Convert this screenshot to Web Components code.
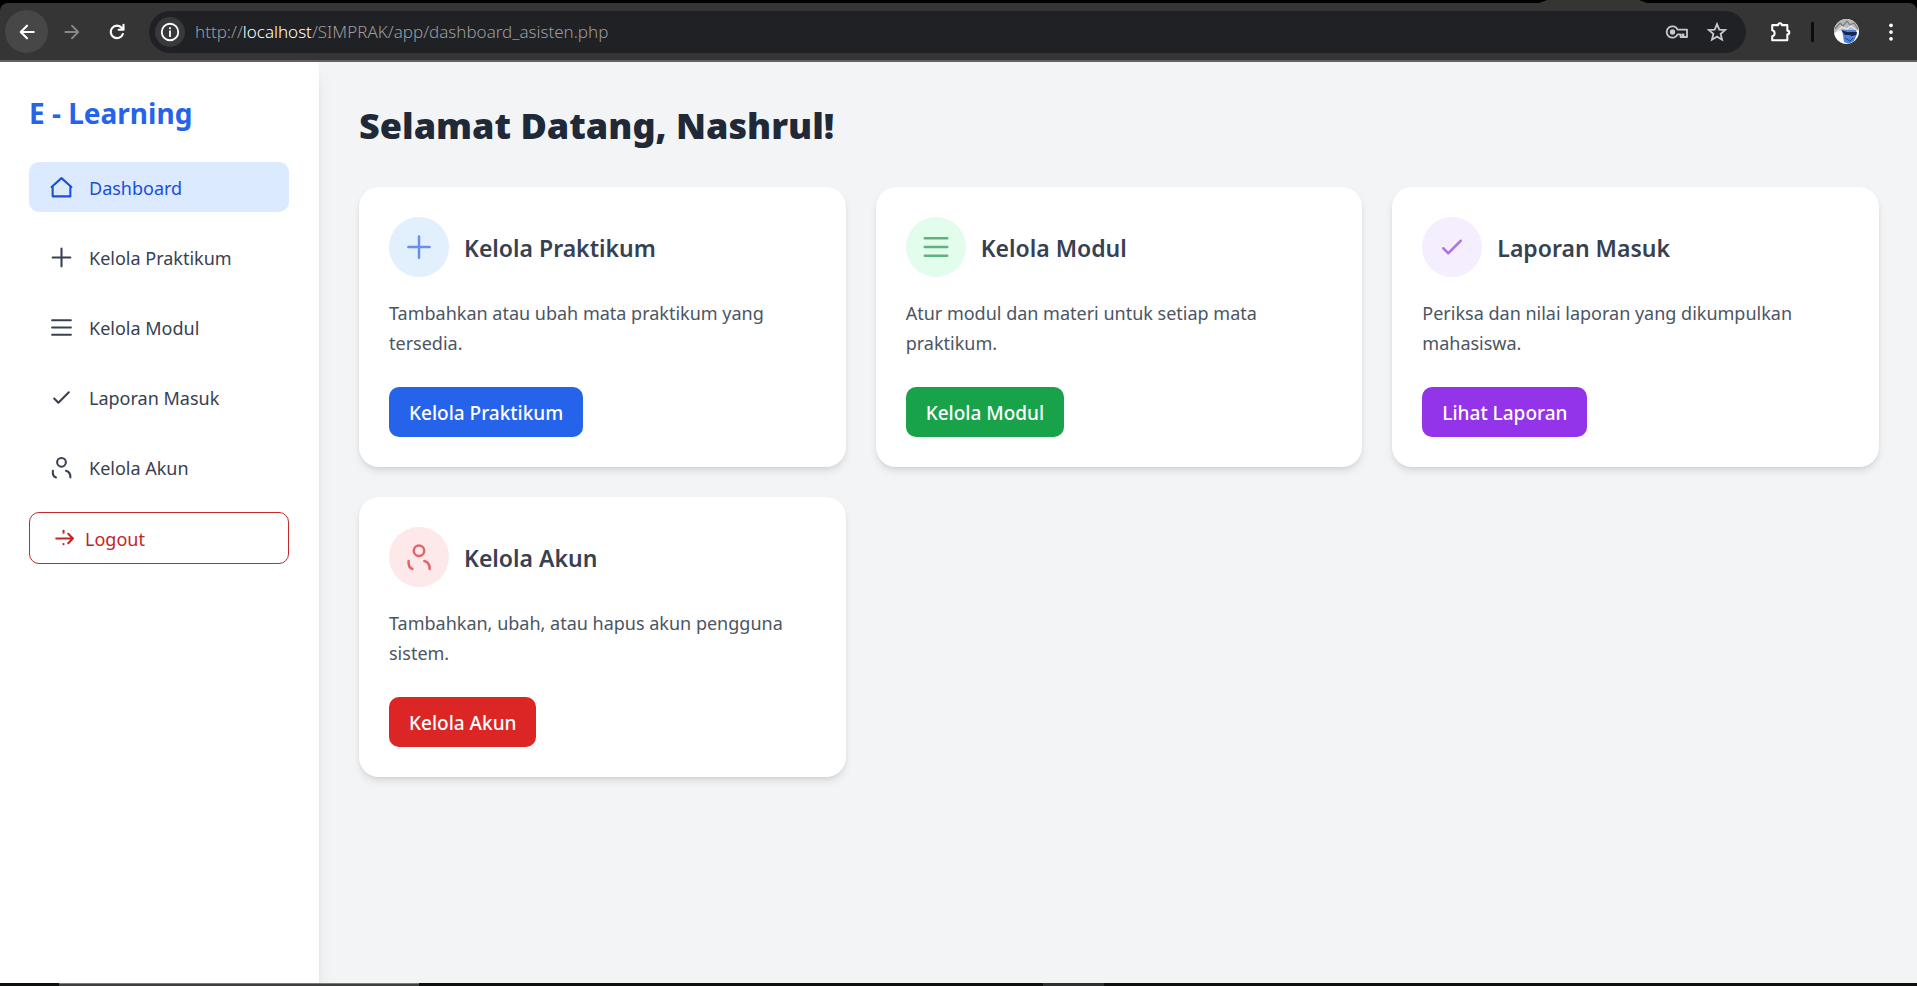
<!DOCTYPE html>
<html lang="id">
<head>
<meta charset="utf-8">
<meta name="viewport" content="width=device-width, initial-scale=1">
<title>E - Learning</title>
<style>
  body { margin: 0; font-family: "Noto Sans", "Open Sans", sans-serif; background: #f3f4f6; }
</style>
</head>
<body>
<app-shell>
  <browser-bar slot="top" scheme="http://" host="localhost" path="/SIMPRAK/app/dashboard_asisten.php"></browser-bar>
  <side-bar slot="side" heading="E - Learning">
    <nav-item icon="home" active>Dashboard</nav-item>
    <nav-item icon="plus">Kelola Praktikum</nav-item>
    <nav-item icon="menu">Kelola Modul</nav-item>
    <nav-item icon="check">Laporan Masuk</nav-item>
    <nav-item icon="user">Kelola Akun</nav-item>
    <nav-item icon="logout" outlined>Logout</nav-item>
  </side-bar>
  <dash-board heading="Selamat Datang, Nashrul!">
    <feature-card icon="plus" tone="blue" heading="Kelola Praktikum" action="Kelola Praktikum">Tambahkan atau ubah mata praktikum yang tersedia.</feature-card>
    <feature-card icon="menu" tone="green" heading="Kelola Modul" action="Kelola Modul">Atur modul dan materi untuk setiap mata praktikum.</feature-card>
    <feature-card icon="check" tone="purple" heading="Laporan Masuk" action="Lihat Laporan">Periksa dan nilai laporan yang dikumpulkan mahasiswa.</feature-card>
    <feature-card icon="user" tone="red" heading="Kelola Akun" action="Kelola Akun">Tambahkan, ubah, atau hapus akun pengguna sistem.</feature-card>
  </dash-board>
  <task-strip slot="bottom"></task-strip>
</app-shell>

<script>
const ICONS = {
  home: '<path d="M2.5 11.5 12 3l9.500 8.500M3.500 10.700v9.800h17v-9.800"/>',
  plus: '<path d="M12 3.500v17M3.500 12h17"/>',
  menu: '<path d="M3 5h18M3 12h18M3 19h18"/>',
  check: '<path d="M5 13l4 4L19 7"/>',
  user: '<circle cx="12" cy="7" r="4.200"/><path d="M3.700 15.200c-.3 3.200.5 5.500 3 6.300M16.300 15.200c3 .8 4.300 3 4.200 6.300"/>',
  logout: '<path d="M6 12h15.500M17.500 7.500 22 12l-4.500 4.500M13 4.500v2M13 17.300v.2"/>',
  back: '<path d="M20 12H5M12 4.500 4.500 12l7.500 7.500"/>',
  forward: '<path d="M4 12h15M12 4.500l7.500 7.500-7.500 7.500"/>',
  reload: '<path d="M19 14.500A7.500 7.500 0 1 1 17.800 7.200L19.500 9M19.800 3.500V9.300H14"/>',
  info: '<circle cx="12" cy="12" r="9"/><path d="M12 11.200v5.300M12 7.500v.6"/>',
  key: '<path d="M12.600 9.700A5.700 5.700 0 1 0 12.600 14.300H15.500V17H17.500V14.300H18.500V17H22V9.700Z"/><circle cx="7.500" cy="12" r="1.800" fill="currentColor"/>',
  star: '<path stroke-linejoin="miter" d="M12 3.500l2.500 5.900 6.400.5-4.900 4.200 1.500 6.300-5.500-3.300-5.500 3.300L8 14.100 3.100 9.900l6.400-.5z"/>',
  puzzle: '<path d="M3.500 4.500h6.500c0-2.800 4-2.800 4 0h6v6c2.800 0 2.800 4 0 4V21H3.500v-4.500c3.500-.5 3.500-6 0-6.500z"/>',
  dots: '<g fill="currentColor" stroke="none"><circle cx="12" cy="3" r="2.500"/><circle cx="12" cy="12" r="2.500"/><circle cx="12" cy="21" r="2.500"/></g>'
};

/* Base: puts the class's markup in an open shadow root. */
class Base extends HTMLElement {
  connectedCallback() {
    if (this.shadowRoot) return;
    const t = document.createElement('template');
    t.innerHTML = this.render();
    this.attachShadow({ mode: 'open' }).append(t.content.cloneNode(true));
  }
  at(name) { return this.getAttribute(name) || ''; }
}

customElements.define('ui-icon', class extends Base {
  render() {
    return `<style>
      :host { display: block; flex: none; width: var(--icon-size, 25px); height: var(--icon-size, 25px); }
      svg { display: block; width: 100%; height: 100%; overflow: visible; }
    </style>
    <svg viewBox="0 0 24 24" fill="none" stroke="currentColor" stroke-width="${this.at('weight') || 2}" stroke-linecap="round" stroke-linejoin="round" aria-hidden="true">${ICONS[this.at('name')]}</svg>`;
  }
});

customElements.define('app-shell', class extends Base {
  render() {
    return `<style>
      :host { display: flex; flex-direction: column; min-height: 100vh; }
      .body { flex: 1; display: flex; }
      .main { flex: 1; min-width: 0; }
      ::slotted([slot="side"]) { flex: none; width: 319px; }
    </style>
    <slot name="top"></slot>
    <div class="body"><slot name="side"></slot><main class="main"><slot></slot></main></div>
    <slot name="bottom"></slot>`;
  }
});

customElements.define('browser-bar', class extends Base {
  render() {
    return `<style>
      :host { display: block; background: #000; border-bottom: 2px solid #636163; }
      .tabs { height: 3px; display: flex; justify-content: flex-end; }
      .tab { width: 108px; margin-right: 270px; background: #353535; clip-path: polygon(8px 0, 100px 0, 100% 100%, 0 100%); }
      .bar { display: flex; align-items: center; height: 57px; padding: 0 11px 0 5px; background: #353535; border-radius: 8px 8px 0 0; color: #fff; box-sizing: border-box; }
      button { display: grid; place-items: center; width: 43px; height: 43px; margin: 0 2px 0 0; padding: 0; border: 0; border-radius: 50%; background: none; color: inherit; --icon-size: 20px; }
      .back { background: #474747; }
      .fwd { color: #868686; }
      .pill { flex: 1; display: flex; align-items: center; height: 42px; box-sizing: border-box; margin: 0 12px 0 9px; padding: 0 9px 0 6px; border-radius: 21px; background: #202125; }
      .pill button { width: 40px; margin: 0; color: #c6c8cb; --icon-size: 24px; }
      .pill .info { width: 30px; height: 30px; background: #38393b; color: #fff; --icon-size: 22px; }
      .url { flex: 1; padding: 1px 0 0 10px; font-size: 17px; line-height: 24px; font-weight: 300; color: #9a9c9f; white-space: nowrap; }
      .url b { font-weight: 300; color: #fff; }
      .pill .star { --icon-size: 22px; }
      .ext { margin: 0; --icon-size: 22px; }
      .sep { width: 3px; height: 20px; margin: 0 20px 0 10px; background: #0c0c0c; border-radius: 1px; }
      .avatar { width: 25px; height: 25px; margin: 0; overflow: hidden; }
      .avatar svg { width: 25px; height: 25px; }
      .more { width: 30px; margin: 0 0 0 17px; --icon-size: 18px; }
    </style>
    <div class="tabs"><div class="tab"></div></div>
    <div class="bar">
      <button class="back" aria-label="Kembali"><ui-icon name="back" weight="2.6"></ui-icon></button>
      <button class="fwd" aria-label="Maju"><ui-icon name="forward" weight="2.2"></ui-icon></button>
      <button aria-label="Muat ulang"><ui-icon name="reload" weight="2.6"></ui-icon></button>
      <div class="pill">
        <button class="info" aria-label="Info situs"><ui-icon name="info" weight="2"></ui-icon></button>
        <div class="url">${this.at('scheme')}<b>${this.at('host')}</b>${this.at('path')}</div>
        <button aria-label="Sandi"><ui-icon name="key" weight="1.8"></ui-icon></button>
        <button class="star" aria-label="Bookmark"><ui-icon name="star" weight="2"></ui-icon></button>
      </div>
      <button class="ext" aria-label="Ekstensi"><ui-icon name="puzzle" weight="2.2"></ui-icon></button>
      <div class="sep"></div>
      <button class="avatar" aria-label="Profil">
        <svg viewBox="0 0 25 25" aria-hidden="true">
          <rect width="25" height="25" fill="#fff"/>
          <path d="M0 0h25v11l-5 2-10 0-3-2-7 3z" fill="#b9b9b9"/>
          <path d="M1 10l5-6 3 3 4-5 3 4 4-2 4 6" fill="none" stroke="#808080" stroke-width="1.300"/>
          <path d="M2 13l6-5 5 2 4-3 6 5" fill="none" stroke="#e6e6e6" stroke-width="1.400"/>
          <path d="M8 11l14 0 1 4-3 7-5 3-5-2-1-6z" fill="#4f82dc"/>
          <path d="M7 11l6 2h10l-1 3-4 1-3-1-4 0z" fill="#16264f"/>
          <path d="M11 19l5 3 3-3" fill="none" stroke="#23448c" stroke-width="1"/>
        </svg>
      </button>
      <button class="more" aria-label="Menu"><ui-icon name="dots"></ui-icon></button>
    </div>`;
  }
});

customElements.define('side-bar', class extends Base {
  render() {
    return `<style>
      :host { display: block; box-sizing: border-box; padding: 30px 30px 30px 29px; background: #fff; box-shadow: 0 12px 18px -4px rgba(0,0,0,.1), 0 5px 8px -4px rgba(0,0,0,.1); }
      h2 { margin: 0 0 28px; font-size: 28px; line-height: 42px; font-weight: 700; color: #2563eb; }
      nav { display: flex; flex-direction: column; gap: 20px; }
    </style>
    <h2>${this.at('heading')}</h2>
    <nav><slot></slot></nav>`;
  }
});

customElements.define('nav-item', class extends Base {
  render() {
    return `<style>
      :host { display: block; }
      a { display: flex; align-items: center; gap: 15px; padding: 10px 20px; border-radius: 10px; color: #374151; text-decoration: none; font-size: 18px; line-height: 28px; }
      span { padding-top: 2px; }
      :host([active]) a { background: #dbeafe; color: #1d4ed8; }
      :host([outlined]) a { gap: 10px; border: 1px solid #c42a2a; color: #c42424; }
    </style>
    <a href="#"${this.hasAttribute('active') ? ' aria-current="page"' : ''}><ui-icon name="${this.at('icon')}"></ui-icon><span><slot></slot></span></a>`;
  }
});

customElements.define('dash-board', class extends Base {
  render() {
    return `<style>
      :host { display: block; padding: 40px 38px 40px 40px; }
      h1 { margin: 0 0 37px; font-size: 36px; line-height: 48px; font-weight: 900; color: #1f2937; }
      .grid { display: grid; grid-template-columns: repeat(3, minmax(0, 1fr)); gap: 30px; }
    </style>
    <h1>${this.at('heading')}</h1>
    <div class="grid"><slot></slot></div>`;
  }
});

customElements.define('feature-card', class extends Base {
  render() {
    return `<style>
      :host { display: block; padding: 30px; border-radius: 20px; background: #fff; box-shadow: 0 5px 8px -1px rgba(0,0,0,.1), 0 2px 5px -2px rgba(0,0,0,.1); }
      :host([tone="blue"]) { --solid: #2563eb; --soft: #e2effd; --ink: #6690ee; }
      :host([tone="green"]) { --solid: #18a34a; --soft: #e2fdec; --ink: #5cb580; }
      :host([tone="purple"]) { --solid: #9333ea; --soft: #f5eeff; --ink: #b074e4; }
      :host([tone="red"]) { --solid: #dc2626; --soft: #fde9ea; --ink: #e0656b; }
      header { display: flex; align-items: center; gap: 15px; }
      .disc { display: grid; place-items: center; width: 60px; height: 60px; border-radius: 50%; background: var(--soft); color: var(--ink); --icon-size: 30px; }
      h3 { margin: 0; padding-top: 2px; font-size: 23px; line-height: 32px; font-weight: 600; color: #374151; }
      p { margin: 21px 0 29px; font-size: 18px; line-height: 30px; color: #4b5563; }
      a { display: inline-block; vertical-align: top; padding: 11px 20px 9px; border-radius: 10px; background: var(--solid); color: #fff; font-size: 19px; line-height: 30px; font-weight: 500; text-decoration: none; }
    </style>
    <header><div class="disc"><ui-icon name="${this.at('icon')}"></ui-icon></div><h3>${this.at('heading')}</h3></header>
    <p><slot></slot></p>
    <a href="#">${this.at('action')}</a>`;
  }
});

customElements.define('task-strip', class extends Base {
  render() {
    return `<style>
      :host { display: flex; height: 3px; background: #0c1110; position: relative; }
      .window { width: 360px; margin-left: 59px; background: #3d403f; border-top: 1px solid #777a79; box-sizing: border-box; }
      .tray { width: 61px; margin-left: 624px; background: #2d302f; }
    </style>
    <div class="window"></div><div class="tray"></div>`;
  }
});
</script>
</body>
</html>
